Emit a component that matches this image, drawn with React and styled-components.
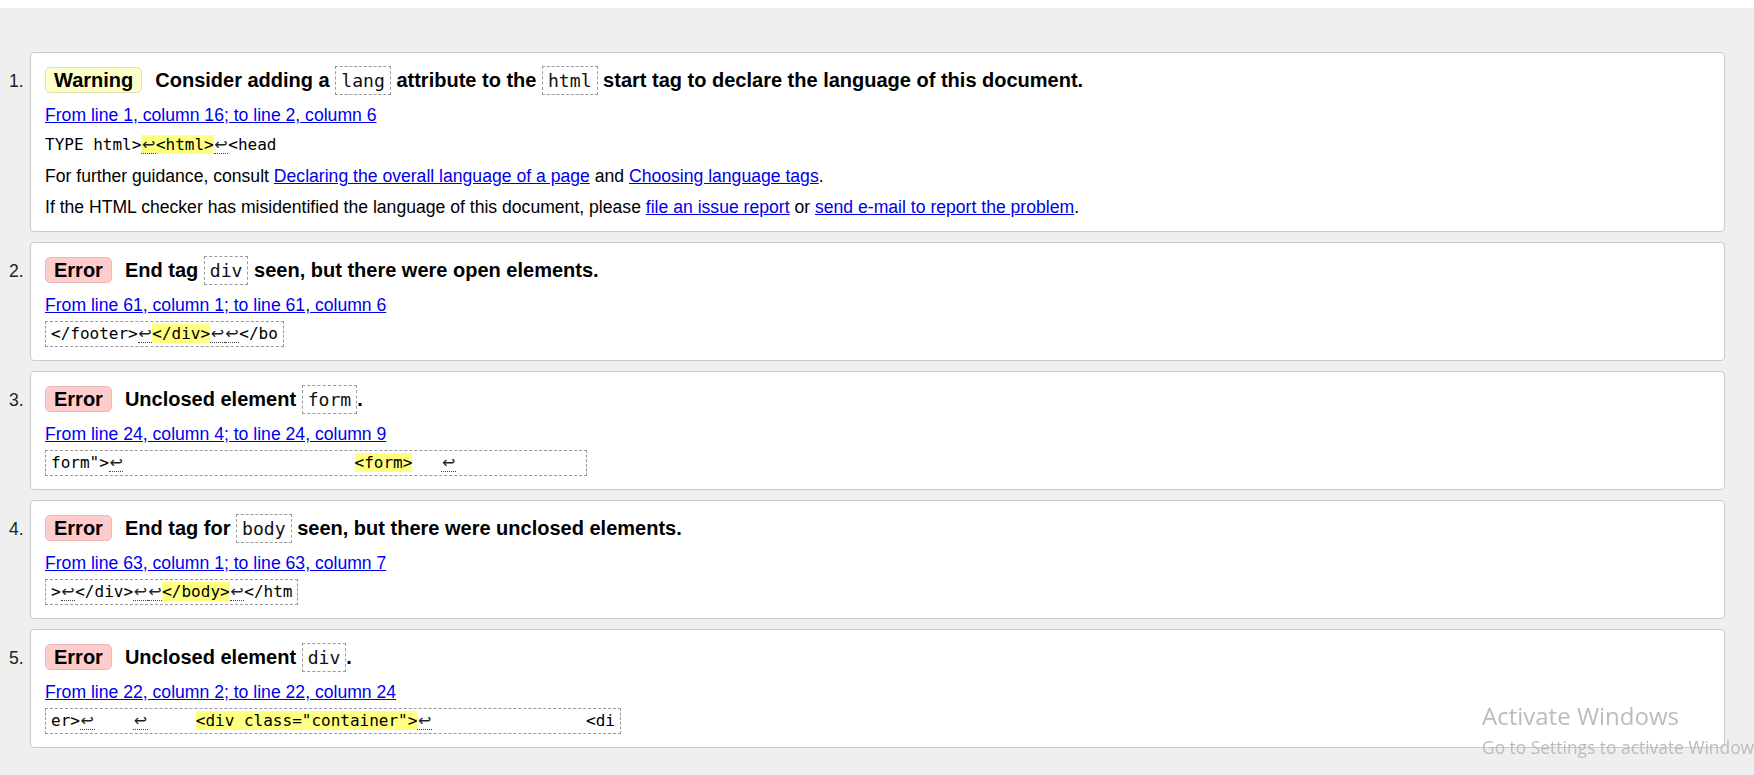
import React from "react";
import styled, { createGlobalStyle } from "styled-components";

const GlobalStyle = createGlobalStyle`
  html, body {
    margin: 0;
    padding: 0;
    background: #efefef;
    overflow: hidden;
  }
  body {
    font-family: "Liberation Sans", Arial, sans-serif;
    color: #000;
  }
`;

const TopStrip = styled.div`
  height: 8px;
  background: #ffffff;
`;

const Main = styled.ol`
  list-style: none;
  margin: 0;
  padding: 44px 29px 20px 0;
  display: flex;
  flex-direction: column;
  gap: 10px;
`;

const Item = styled.li`
  display: flex;
  align-items: baseline;
`;

const Num = styled.span`
  flex: none;
  width: 30px;
  box-sizing: border-box;
  padding-left: 9px;
  font-size: 17.6px;
  color: #222;
`;

const Card = styled.div`
  flex: 1;
  min-width: 0;
  background: #ffffff;
  border: 1px solid #cbcbcb;
  border-radius: 4px;
  padding: 12px 14px 13px;
`;

const Title = styled.p`
  margin: 0;
  font-size: 20px;
  font-weight: bold;
  line-height: 30px;
`;

const Badge = styled.strong`
  display: inline-block;
  padding: 1px 8px 0;
  line-height: 23px;
  border-radius: 5px;
  margin-right: 13px;
  border: 1px solid ${(p) => (p.$kind === "warning" ? "#e4e4b0" : "#eab9b9")};
  background: ${(p) => (p.$kind === "warning" ? "#ffffcc" : "#ffcccc")};
`;

const TitleCode = styled.code`
  display: inline-block;
  font-family: "DejaVu Sans Mono", "Liberation Mono", monospace;
  font-size: 18.1px;
  font-weight: normal;
  line-height: 21px;
  padding: 3px 5px;
  border: 1px dashed #9a9a9a;
  color: #111;
`;

const Para = styled.p`
  margin: 9px 0 0;
  font-size: 17.6px;
  line-height: 22px;
`;

const Link = styled.a`
  color: #0000ee;
  text-decoration: underline;
`;

const ExtractPara = styled.p`
  margin: ${(p) => (p.$boxed ? "5px" : "8px")} 0 0;
  line-height: 22px;
`;

const ExtractCode = styled.code`
  display: inline-block;
  font-family: "DejaVu Sans Mono", "Liberation Mono", monospace;
  font-size: 16px;
  line-height: 22px;
  white-space: pre;
  color: #000;
  border: ${(p) => (p.$boxed ? "1px dashed #9a9a9a" : "none")};
  padding: ${(p) => (p.$boxed ? "1px 5px" : "0")};
`;

const Hl = styled.b`
  font-weight: normal;
  background: #ffff80;
`;

const Lf = styled.span`
  display: inline-block;
  width: 14.6px;
  text-align: center;
  font-family: "DejaVu Sans", sans-serif;
  font-size: 16px;
  line-height: 14px;
  padding-bottom: 1px;
  border-bottom: 1px dotted #444;
  color: #222;
`;

const Watermark = styled.div`
  position: fixed;
  left: 1482px;
  top: 700px;
  white-space: nowrap;
  pointer-events: none;
  font-family: "Open Sans", "Noto Sans", sans-serif;
  color: #bcbcbc;
`;

const WmTitle = styled.div`
  font-size: 24px;
  line-height: 32px;
`;

const WmSub = styled.div`
  margin-top: 4px;
  font-size: 17.4px;
  line-height: 22px;
`;

const sp = (n) => " ".repeat(n);

const messages = [
  {
    kind: "warning",
    label: "Warning",
    title: ["Consider adding a ", { c: "lang" }, " attribute to the ", { c: "html" }, " start tag to declare the language of this document."],
    loc: "From line 1, column 16; to line 2, column 6",
    boxed: false,
    extract: ["TYPE html>", { hl: [{ lf: true }, "<html>"] }, { lf: true }, "<head"],
    extra: true,
  },
  {
    kind: "error",
    label: "Error",
    title: ["End tag ", { c: "div" }, " seen, but there were open elements."],
    loc: "From line 61, column 1; to line 61, column 6",
    boxed: true,
    extract: ["</footer>", { lf: true }, { hl: ["</div>"] }, { lf: true }, { lf: true }, "</bo"],
  },
  {
    kind: "error",
    label: "Error",
    title: ["Unclosed element ", { c: "form" }, "."],
    loc: "From line 24, column 4; to line 24, column 9",
    boxed: true,
    extract: ['form">', { lf: true }, sp(24), { hl: ["<form>"] }, sp(3), { lf: true }, sp(13)],
  },
  {
    kind: "error",
    label: "Error",
    title: ["End tag for ", { c: "body" }, " seen, but there were unclosed elements."],
    loc: "From line 63, column 1; to line 63, column 7",
    boxed: true,
    extract: [">", { lf: true }, "</div>", { lf: true }, { lf: true }, { hl: ["</body>"] }, { lf: true }, "</htm"],
  },
  {
    kind: "error",
    label: "Error",
    title: ["Unclosed element ", { c: "div" }, "."],
    loc: "From line 22, column 2; to line 22, column 24",
    boxed: true,
    extract: ["er>", { lf: true }, sp(4), { lf: true }, sp(5), { hl: ['<div class="container">'] }, { lf: true }, sp(16), "<di"],
  },
];

function renderSegs(segs) {
  return segs.map((s, i) => {
    if (typeof s === "string") return <React.Fragment key={i}>{s}</React.Fragment>;
    if (s.lf) return <Lf key={i} title="Line break">↩</Lf>;
    if (s.hl) return <Hl key={i}>{renderSegs(s.hl)}</Hl>;
    return null;
  });
}

function Message({ m, n }) {
  return (
    <Item>
      <Num>{n}.</Num>
      <Card>
        <Title>
          <Badge $kind={m.kind}>{m.label}</Badge>
          {m.title.map((t, i) =>
            typeof t === "string" ? (
              <React.Fragment key={i}>{t}</React.Fragment>
            ) : (
              <TitleCode key={i}>{t.c}</TitleCode>
            )
          )}
        </Title>
        <Para>
          <Link href="#">{m.loc}</Link>
        </Para>
        <ExtractPara $boxed={m.boxed}>
          <ExtractCode $boxed={m.boxed}>{renderSegs(m.extract)}</ExtractCode>
        </ExtractPara>
        {m.extra && (
          <>
            <Para>
              For further guidance, consult <Link href="#">Declaring the overall language of a page</Link> and{" "}
              <Link href="#">Choosing language tags</Link>.
            </Para>
            <Para>
              If the HTML checker has misidentified the language of this document, please{" "}
              <Link href="#">file an issue report</Link> or <Link href="#">send e-mail to report the problem</Link>.
            </Para>
          </>
        )}
      </Card>
    </Item>
  );
}

export default function App() {
  return (
    <>
      <GlobalStyle />
      <TopStrip />
      <Main>
        {messages.map((m, i) => (
          <Message key={i} m={m} n={i + 1} />
        ))}
      </Main>
      <Watermark>
        <WmTitle>Activate Windows</WmTitle>
        <WmSub>Go to Settings to activate Windows.</WmSub>
      </Watermark>
    </>
  );
}
